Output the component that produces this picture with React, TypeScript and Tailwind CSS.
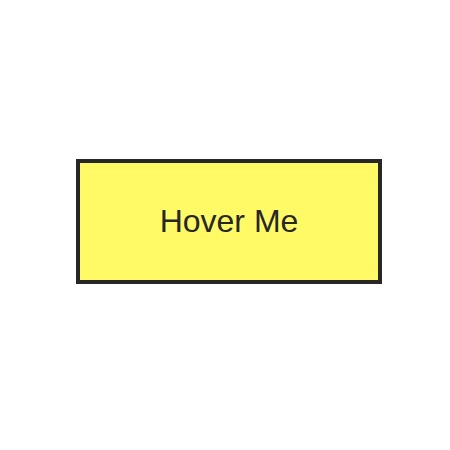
export default function App() {
  return (
    <main className="flex min-h-screen items-center justify-center bg-white pl-2 pb-2 font-['Liberation_Sans',Arial,sans-serif]">
      <button
        type="button"
        className="border-4 border-[#272727] bg-[#fffa65] px-20 py-10 text-[32px] leading-[37px] text-[#272727] hover:bg-[#272727] hover:text-[#fffa65]"
      >
        Hover Me
      </button>
    </main>
  );
}
